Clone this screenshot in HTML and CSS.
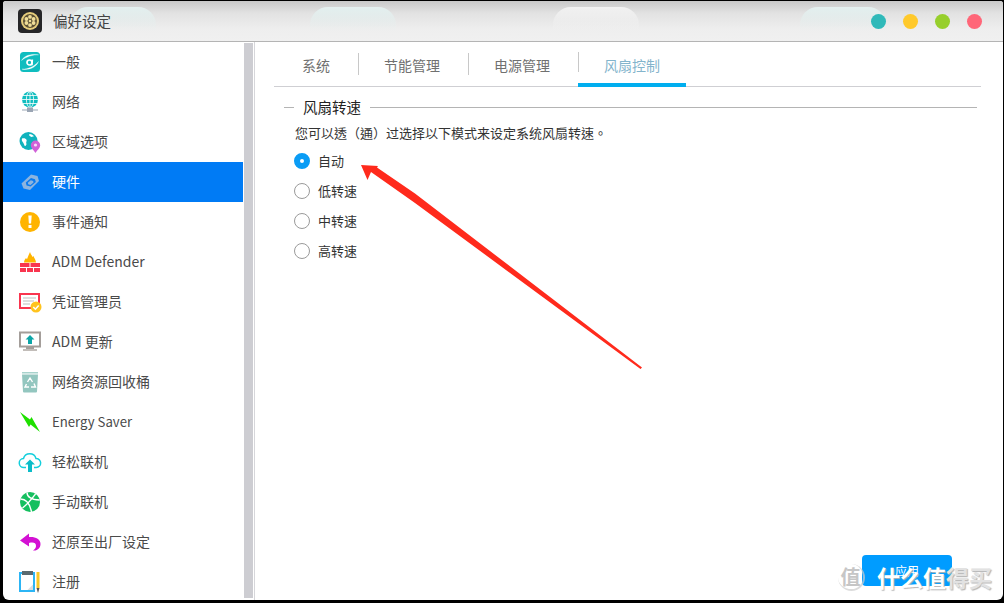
FILE: index.html
```html
<!DOCTYPE html>
<html lang="zh">
<head>
<meta charset="utf-8">
<title>偏好设定</title>
<link rel="stylesheet" href="styles.css">
</head>
<body>
<div class="window">
  <header class="titlebar">
    <span class="ghost ghost-a"></span><span class="ghost ghost-b"></span><span class="ghost ghost-c"></span><span class="ghost ghost-d"></span>
    <span class="app-icon">
      <svg width="24" height="24" viewBox="0 0 24 24"><rect width="24" height="24" rx="4" fill="#262628"/><circle cx="12" cy="12" r="9" fill="#e6cd7c"/><circle cx="12" cy="12" r="7" fill="#5a4f34"/><g fill="#efdd98"><circle cx="12" cy="7.900" r="1.900"/><circle cx="12" cy="16.100" r="1.900"/><circle cx="8.400" cy="10" r="1.900"/><circle cx="15.600" cy="10" r="1.900"/><circle cx="8.400" cy="14" r="1.900"/><circle cx="15.600" cy="14" r="1.900"/><circle cx="12" cy="12" r="1.300"/></g></svg>
    </span>
    <span class="app-title">偏好设定</span>
    <div class="lights">
      <span class="light l-teal"></span><span class="light l-yellow"></span><span class="light l-green"></span><span class="light l-red"></span>
    </div>
  </header>
  <div class="body">
    <nav class="sidebar">
      <ul class="menu">
        <li class="item"><span class="icon"><svg width="22" height="22" viewBox="0 0 22 22"><rect x="1" y="1" width="20" height="20" rx="3.500" fill="#10bdbf"/><path d="M2.500 9.500C5 4.500 12 2.500 19.500 3.800 14 3.800 7.500 5.500 2.500 9.500zM19.500 10.500C17.500 16 10.500 19.500 3 18.200 9 18.200 15.500 15.500 19.500 10.500z" fill="#fff" stroke="#fff" stroke-width=".3"/><circle cx="10.500" cy="11.500" r="2.500" fill="none" stroke="#fff" stroke-width="1.700"/><path d="M13.400 8.500l-.4 5.800" stroke="#fff" stroke-width="1.500"/></svg></span><span class="label">一般</span></li>
        <li class="item"><span class="icon"><svg width="22" height="22" viewBox="0 0 22 22"><circle cx="11" cy="8.500" r="8" fill="#10bdbf"/><g fill="none" stroke="#fff" stroke-width=".8"><ellipse cx="11" cy="8.500" rx="3.600" ry="8"/><path d="M11 .5v16M3 8.500h16M4 4.500h14M4 12.500h14"/></g><path d="M3 19h16" stroke="#9aa5b4" stroke-width="1"/><rect x="8" y="16.500" width="6" height="4.500" fill="#9aa5b4"/></svg></span><span class="label">网络</span></li>
        <li class="item"><span class="icon"><svg width="22" height="22" viewBox="0 0 22 22"><circle cx="9.500" cy="10" r="9" fill="#10b3bd"/><path d="M3 7.500c2-.8 3.800-.2 4.500 1.200s-.8 2.300-.2 3.600-.4 2.700-1.200 2.700-1.200-2.800-2-3.600-1.700-2.300-1.100-3.900zM10.500 3c2 .2 3.500 1 4.500 2.300l-2.800.8-2.200-1.900z" fill="#fff"/><path d="M16.500 9.500a4.700 4.700 0 0 1 4.700 4.700c0 3-3 4.800-4.700 7.800-1.700-3-4.700-4.800-4.700-7.800a4.700 4.700 0 0 1 4.700-4.700z" fill="#d062d8"/><circle cx="16.500" cy="14" r="1.600" fill="#f6dcf8"/></svg></span><span class="label">区域选项</span></li>
        <li class="item active"><span class="icon"><svg width="22" height="22" viewBox="0 0 22 22"><path d="M2.500 12.500 12 3.500l6.500 1.500 1.500 5-9 9-6.500-1.500z" fill="#8cb4df"/><path d="M6.800 11.500 12 7l4 1.200.8 2.800-5.200 4.600-4-1.200z" fill="#0a7bef"/><path d="M8.800 11.800l3-2.600 2.300.7.400 1.500-3 2.600-2.300-.7z" fill="#8cb4df"/></svg></span><span class="label">硬件</span></li>
        <li class="item"><span class="icon"><svg width="22" height="22" viewBox="0 0 22 22"><circle cx="11" cy="11" r="10" fill="#ffb400"/><path d="M9.300 4.500h3.400l-.6 8h-2.200z" fill="#fff"/><rect x="9.500" y="14" width="3" height="3" fill="#fff"/></svg></span><span class="label">事件通知</span></li>
        <li class="item"><span class="icon"><svg width="22" height="22" viewBox="0 0 22 22"><path d="M5 11.500c0-2 1-3 2-4.500l1 1.300C9 5.500 10 3 11 1c.5 2 2 3.500 2.500 5l1-1c.5 2 2.500 4 2.500 6.500z" fill="#ffb400"/><g fill="#f9354f"><rect x="1" y="12" width="9.500" height="4"/><rect x="11.500" y="12" width="9.500" height="4"/><rect x="1" y="17" width="6" height="4"/><rect x="8" y="17" width="6" height="4"/><rect x="15" y="17" width="6" height="4"/></g></svg></span><span class="label">ADM Defender</span></li>
        <li class="item"><span class="icon"><svg width="24" height="22" viewBox="0 0 24 22"><rect x="2" y="3" width="19" height="14" fill="#fff" stroke="#f9354f" stroke-width="2"/><path d="M5 7h13M5 10h11M5 13h7" stroke="#bdbdbd"/><circle cx="18" cy="16" r="5.500" fill="#ffc31e"/><path d="m15.300 16 2.100 2.200 3.300-3.800" fill="none" stroke="#fff" stroke-width="1.500"/></svg></span><span class="label">凭证管理员</span></li>
        <li class="item"><span class="icon"><svg width="22" height="22" viewBox="0 0 22 22"><rect x="1" y="1.500" width="20" height="14" fill="#fff" stroke="#a49e9a" stroke-width="2"/><rect x="7" y="16" width="8" height="2" fill="#a49e9a"/><rect x="4" y="18" width="14" height="2" fill="#c2bdb9"/><path d="M11 4l4.500 4.500h-2.500v4.500h-4V8.500H6.500z" fill="#0ca6a8"/></svg></span><span class="label">ADM 更新</span></li>
        <li class="item"><span class="icon"><svg width="22" height="22" viewBox="0 0 22 22"><rect x="3" y="1" width="16" height="1.500" fill="#a7d2cc"/><path d="M3 3.500h16l-1 17a1 1 0 0 1-1 1H5a1 1 0 0 1-1-1z" fill="#93c6bf"/><g fill="none" stroke="#fff" stroke-width="1.400"><path d="M8.500 11 11 7l2.500 4M7.500 13l-1.500 3h4M15 12.500l1.500 3.500H12"/></g></svg></span><span class="label">网络资源回收桶</span></li>
        <li class="item"><span class="icon"><svg width="22" height="22" viewBox="0 0 22 22"><path d="M1 1l10 7.500L12.500 6 21 21l-9.500-7.500L10 16z" fill="#1fe000"/></svg></span><span class="label label-tight">Energy Saver</span></li>
        <li class="item"><span class="icon"><svg width="24" height="22" viewBox="0 0 24 22"><path d="M8 16.500H6a4.500 4.500 0 0 1-.5-9 6.500 6.500 0 0 1 12.500 0 4.500 4.500 0 0 1 .3 9H16" fill="none" stroke="#14cfdc" stroke-width="1.500"/><path d="M12 8.500l5 5h-3V21h-4v-7.500H7z" fill="#0cbcc8"/></svg></span><span class="label">轻松联机</span></li>
        <li class="item"><span class="icon"><svg width="22" height="22" viewBox="0 0 22 22"><circle cx="11" cy="11" r="10" fill="#15bf5f"/><path d="M1.500 8c5 0 9 3 11 13M8 1.500c0 4 3 7 12.500 7.500M16.500 3c-3 4-6.500 9-13 14" fill="none" stroke="#fff" stroke-width="1.400"/></svg></span><span class="label">手动联机</span></li>
        <li class="item"><span class="icon"><svg width="22" height="20" viewBox="0 0 22 20"><path d="M10 1.500 1 8.500l9 6v-3.500c4-1 7-.5 7 3 0 1.800-1.200 3.200-3 4.500 5 .5 7.500-3 7.500-6.500 0-5.500-5.500-7.500-11.500-7z" fill="#d311d3"/></svg></span><span class="label">还原至出厂设定</span></li>
        <li class="item"><span class="icon"><svg width="22" height="22" viewBox="0 0 22 22"><rect x="1" y="2" width="14" height="18" fill="#fff" stroke="#2cb5f5" stroke-width="2"/><rect x="3" y="0" width="11" height="4" fill="#5a6a70"/><path d="M8.500 19l5.500-5.500V19z" fill="#dcdcdc"/><rect x="17.500" y="1" width="3" height="16" fill="#f9c828"/><path d="M17.500 17h3L19 22z" fill="#555"/></svg></span><span class="label">注册</span></li>
      </ul>
      <div class="scrollbar"></div>
    </nav>
    <main class="content">
      <div class="tabs">
        <span class="tab tab-sys">系统</span>
        <span class="tab tab-mid">节能管理</span>
        <span class="tab tab-mid">电源管理</span>
        <span class="tab tab-active">风扇控制</span>
      </div>
      <section class="group">
        <div class="legend"><span class="dash"></span><span class="legend-text">风扇转速</span><span class="rule"></span></div>
        <p class="desc" lang="zh-TW">您可以透（通）过选择以下模式来设定系统风扇转速。</p>
        <div class="options">
          <label class="option"><span class="radio radio-on"></span><span class="opt-text">自动</span></label>
          <label class="option"><span class="radio"></span><span class="opt-text">低转速</span></label>
          <label class="option"><span class="radio"></span><span class="opt-text">中转速</span></label>
          <label class="option"><span class="radio"></span><span class="opt-text">高转速</span></label>
        </div>
      </section>
      <div class="footer"><button class="apply">应用</button></div>
    </main>
  </div>
</div>
<svg class="arrow" width="1004" height="603" viewBox="0 0 1004 603"><path d="M361 165 378 166 377 167.500 415 193.500 642 367.500 640.500 369 415 203 371 172 367.500 180z" fill="#ff2a1c"/></svg>
<div class="watermark"><span class="wm-badge">值</span><span class="wm-text"><span class="wm-white">什么值</span>得买</span></div>
</body>
</html>
```
FILE: styles.css
```css
* { box-sizing: border-box; }
html, body { margin: 0; height: 603px; overflow: hidden; }
body {
  background: #000;
  padding: 1px 1px 3px 3px;
  font-family: "Noto Sans CJK SC", "Open Sans", sans-serif;
  font-size: 14px;
  color: #4a4a4a;
}
.window {
  height: 599px;
  background: #fff;
  border-radius: 3px 3px 6px 6px;
  overflow: hidden;
  display: flex;
  flex-direction: column;
}
.titlebar {
  position: relative;
  height: 41px;
  flex: none;
  display: flex;
  align-items: center;
  padding: 0 21px 0 15px;
  background: linear-gradient(#c9c9c9 0%, #e2e2e2 30%, #eeeeee 70%, #f0f0f0 100%);
  border-bottom: 1px solid #b4b4b4;
}
.ghost {
  position: absolute;
  top: 6px;
  width: 86px;
  height: 24px;
  border-radius: 18px 18px 0 0;
  background: linear-gradient(#e4f1f0, rgba(238, 238, 238, 0));
}
.ghost-a { left: 67px; }
.ghost-b { left: 307px; }
.ghost-c { left: 550px; background: linear-gradient(#f3f3f3, rgba(238, 238, 238, 0)); }
.ghost-d { left: 797px; }
.app-icon { position: relative; width: 24px; height: 24px; }
.app-icon svg { display: block; }
.app-title { position: relative; margin: 0 0 2px 11px; font-size: 14.500px; color: #444; }
.lights { position: relative; margin-left: auto; display: flex; gap: 17px; }
.light { width: 15px; height: 15px; border-radius: 50%; }
.l-teal { background: #2fb9b9; }
.l-yellow { background: #ffc92b; }
.l-green { background: #97cf2c; }
.l-red { background: #ff6678; }
.body { flex: 1; display: flex; min-height: 0; }
.sidebar {
  width: 252px;
  flex: none;
  display: flex;
  border-right: 1px solid #d6d6da;
}
.menu { list-style: none; margin: 0; padding: 0; width: 240px; flex: none; }
.item {
  height: 40px;
  display: flex;
  align-items: center;
  color: #4a4a4a;
}
.label { margin-bottom: 2px; }
.label-tight { font-size: 13.200px; }
.icon {
  width: 49px;
  padding: 0 11px 0 16px;
  flex: none;
  display: flex;
  justify-content: center;
}
.icon svg { display: block; flex: none; }
.active { background: #007bf5; color: #fff; }
.scrollbar { width: 9px; margin: 1px 0 2px 1px; background: #cdcdd2; }
.content {
  flex: 1;
  min-width: 0;
  display: flex;
  flex-direction: column;
  padding: 0 0 14px 19px;
}
.tabs {
  height: 45px;
  margin-right: 22px;
  flex: none;
  display: flex;
  align-items: flex-end;
  border-bottom: 1px solid #cfcfd3;
}
.tab {
  height: 34px;
  width: 110px;
  flex: none;
  margin-bottom: -1px;
  text-align: center;
  line-height: 24px;
  color: #707070;
  position: relative;
}
.tab-mid { padding-right: 2px; }
.tab::before {
  content: "";
  position: absolute;
  left: 0;
  top: 0;
  width: 1px;
  height: 22px;
  background: #c8c8c8;
}
.tab-sys { width: 84px; }
.tab-sys::before { display: none; }
.tab-active {
  width: 108px;
  color: #83b4cc;
  border-bottom: 4px solid #00aeef;
}
.tab-active::before { top: -1px; height: 20px; }
.group { padding: 10px 26px 0 10px; }
.legend { display: flex; align-items: center; gap: 9px; height: 20px; }
.dash { width: 10px; height: 1px; background: #b4b4b4; }
.rule { flex: 1; height: 1px; background: #b4b4b4; }
.legend-text { font-size: 14.500px; color: #222; margin-bottom: 2px; }
.desc { margin: 6px 0 0 11px; font-family: "Noto Sans CJK TC", sans-serif; font-size: 13px; color: #333; line-height: 20px; }
.options { margin: 3px 0 0 10px; display: flex; flex-direction: column; }
.option { height: 30px; display: flex; align-items: center; gap: 8px; font-size: 13px; color: #333; }
.opt-text { margin-bottom: 2px; }
.radio {
  width: 16px;
  height: 16px;
  border-radius: 50%;
  border: 1px solid #9a9a9a;
  background: #fff;
  flex: none;
}
.radio-on { border: 6px solid #0a9cf5; }
.footer { margin-top: auto; display: flex; justify-content: flex-end; padding-right: 51px; }
.apply {
  width: 90px;
  height: 31px;
  border: 0;
  border-radius: 4px;
  background: #009cff;
  color: #fff;
  font: 12px "Noto Sans CJK SC", sans-serif;
}
.arrow { position: absolute; left: 0; top: 0; pointer-events: none; }
.watermark {
  position: absolute;
  left: 838px;
  top: 561px;
  display: flex;
  align-items: center;
  gap: 12px;
}
.wm-badge {
  width: 27px;
  height: 27px;
  border-radius: 50%;
  border-right: 2px solid rgba(205, 205, 205, .7);
  border-bottom: 2px solid rgba(205, 205, 205, .7);
  color: #c6c6c6;
  font-size: 20px;
  line-height: 25px;
  text-align: center;
  font-weight: 700;
}
.wm-text { font-size: 23px; line-height: 32px; color: #e2e2e2; font-weight: 700; text-shadow: 1px 1px 1px #b4b4b4; white-space: nowrap; }
.wm-white { color: #fff; }
```
